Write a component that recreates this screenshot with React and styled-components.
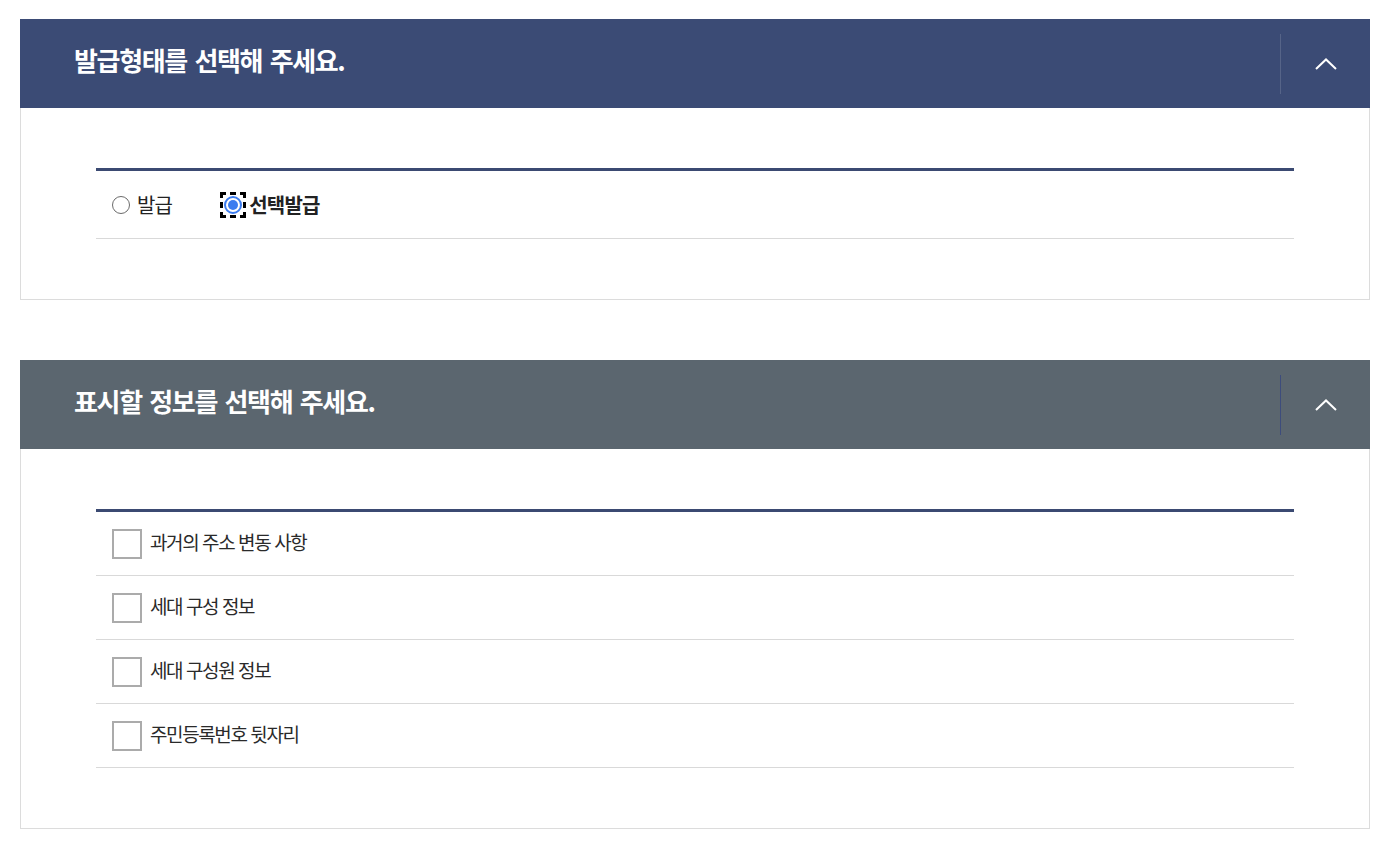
import React, { useState } from 'react'
import styled, { createGlobalStyle } from 'styled-components'

const GlobalStyle = createGlobalStyle`
  body {
    margin: 0;
    background: #fff;
    font-family: 'Noto Sans CJK KR', 'Noto Sans', sans-serif;
    color: #222;
  }
`

const Page = styled.div`
  padding: 19px 12px 20px 20px;
  display: flex;
  flex-direction: column;
  row-gap: 60px;
`

const Panel = styled.section`
  display: flex;
  flex-direction: column;
`

const PanelHeader = styled.div`
  height: 89px;
  display: flex;
  align-items: center;
  background-color: ${props => props.bgcolor};
`

const Title = styled.h2`
  flex: 1;
  margin: 0 0 8px;
  padding-left: 54px;
  font-size: 26px;
  font-weight: 700;
  letter-spacing: -1.35px;
  word-spacing: 3px;
  color: #fff;
`

const Divider = styled.span`
  width: 1px;
  height: 60px;
  background-color: ${props => props.color};
`

const Toggle = styled.button`
  width: 89px;
  height: 88px;
  border: none;
  background: transparent;
  display: grid;
  place-items: center;
  padding: 0;
  cursor: pointer;
`

const PanelBody = styled.div`
  border: 1px solid #dcdcdc;
  border-top: none;
  padding: 60px 75px 60px;
`

const List = styled.div`
  border-top: 3px solid #3b4a72;
  display: flex;
  flex-direction: column;
`

const RadioRow = styled.div`
  height: 67px;
  border-bottom: 1px solid #d9d9d9;
  display: flex;
  align-items: center;
  padding-left: 16px;
  column-gap: 52px;
`

const RadioLabel = styled.label`
  display: flex;
  align-items: center;
  column-gap: 7px;
  font-size: 20px;
  letter-spacing: -0.8px;
  font-weight: ${props => (props.checked ? 700 : 400)};
  color: #222;
  cursor: pointer;
`

const Focus = styled.span`
  display: grid;
  place-items: center;
  width: 26px;
  height: 26px;
  margin: 0 -4px;
  box-sizing: border-box;
  outline: ${props => (props.focused ? '3px dashed #000' : 'none')};
  outline-offset: -3px;
`

const RadioCircle = styled.span`
  width: 18px;
  height: 18px;
  box-sizing: border-box;
  border-radius: 50%;
  border: ${props => (props.checked ? '2px solid #3b7cf0' : '1.5px solid #6b6b6b')};
  display: grid;
  place-items: center;
  background: #fff;
  &::after {
    content: '';
    width: 10px;
    height: 10px;
    border-radius: 50%;
    background: ${props => (props.checked ? '#3b7cf0' : 'transparent')};
  }
`

const CheckRow = styled.label`
  height: 63px;
  border-bottom: 1px solid #d9d9d9;
  display: flex;
  align-items: center;
  padding-left: 16px;
  column-gap: 8px;
  font-size: 19px;
  letter-spacing: -1.4px;
  word-spacing: 1px;
  color: #2a2a2a;
  cursor: pointer;
`

const CheckText = styled.span`
  margin-bottom: 4px;
`

const Box = styled.span`
  width: 30px;
  height: 30px;
  box-sizing: border-box;
  border: 2px solid #ababab;
  background: #fff;
`

const Chevron = () => (
  <svg width="22" height="12" viewBox="0 0 22 12">
    <path d="M1 11 L11 1.5 L21 11" fill="none" stroke="#fff" strokeWidth="2" />
  </svg>
)

const options = ['과거의 주소 변동 사항', '세대 구성 정보', '세대 구성원 정보', '주민등록번호 뒷자리']

export default function App() {
  const [type, setType] = useState('select')
  return (
    <>
      <GlobalStyle />
      <Page>
        <Panel>
          <PanelHeader bgcolor="#3b4b75">
            <Title>발급형태를 선택해 주세요.</Title>
            <Divider color="rgba(255,255,255,0.14)" />
            <Toggle aria-label="접기"><Chevron /></Toggle>
          </PanelHeader>
          <PanelBody>
            <List>
              <RadioRow>
                <RadioLabel checked={type === 'all'} onClick={() => setType('all')}>
                  <RadioCircle checked={type === 'all'} />
                  발급
                </RadioLabel>
                <RadioLabel checked={type === 'select'} onClick={() => setType('select')}>
                  <Focus focused={type === 'select'}>
                    <RadioCircle checked={type === 'select'} />
                  </Focus>
                  선택발급
                </RadioLabel>
              </RadioRow>
            </List>
          </PanelBody>
        </Panel>
        <Panel>
          <PanelHeader bgcolor="#5b666f">
            <Title>표시할 정보를 선택해 주세요.</Title>
            <Divider color="#3d4c7c" />
            <Toggle aria-label="접기"><Chevron /></Toggle>
          </PanelHeader>
          <PanelBody>
            <List>
              {options.map(o => (
                <CheckRow key={o}>
                  <Box />
                  <CheckText>{o}</CheckText>
                </CheckRow>
              ))}
            </List>
          </PanelBody>
        </Panel>
      </Page>
    </>
  )
}
